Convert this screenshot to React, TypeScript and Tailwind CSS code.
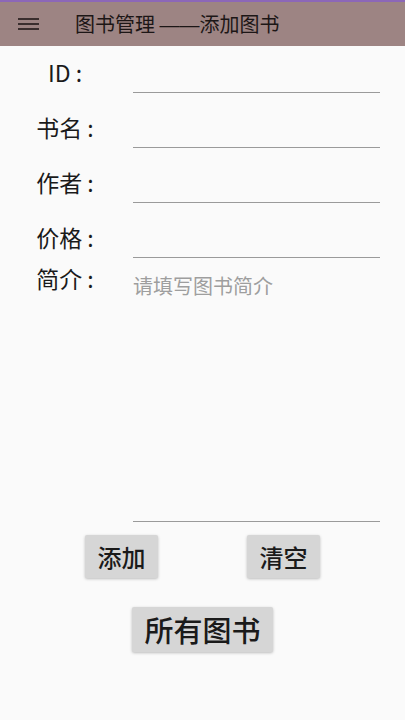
const font = { fontFamily: '"Noto Sans CJK SC", Roboto, sans-serif' };

const fields = ['ID :', '书名 :', '作者 :', '价格 :'];

function FieldRow({ label }: { label: string }) {
  return (
    <div className="flex h-[39px] items-start">
      <div className="w-[130px] text-center text-[23px] leading-[36px] text-[#1a1a1a]">{label}</div>
      <div className="ml-[3px] h-[39px] w-[247px] border-b border-[#9a9a9a]" />
    </div>
  );
}

export default function App() {
  return (
    <div className="min-h-[720px] w-[405px] bg-[#fafafa]" style={font}>
      <header className="flex h-[46px] items-center border-t-2 border-[#8c67b8] bg-[#9d8483]">
        <div className="ml-[18px] flex w-[21px] flex-col gap-[3px]">
          <span className="h-[2px] bg-[#3a2e2e]" />
          <span className="h-[2px] bg-[#3a2e2e]" />
          <span className="h-[2px] bg-[#3a2e2e]" />
        </div>
        <h1 className="ml-[36px] text-[20px] leading-none text-[#1c1616]">
          图书管理 <span className="font-['Liberation_Sans',sans-serif]">——</span>添加图书
        </h1>
      </header>

      <main className="pt-[8px]">
        <div className="flex flex-col gap-[16px]">
          {fields.map((f) => (
            <FieldRow key={f} label={f} />
          ))}
        </div>

        <div className="mt-[1px] flex">
          <div className="w-[130px] text-center text-[23px] leading-[38px] text-[#1a1a1a]">简介 :</div>
          <div className="ml-[3px] h-[263px] w-[247px] border-b border-[#9a9a9a] pt-[14px] text-[20px] leading-[26px] text-[#9e9e9e]">
            请填写图书简介
          </div>
        </div>

        <div className="mt-[13px] flex justify-center gap-[89px]">
          <button className="h-[43px] w-[73px] rounded-[2px] bg-[#d6d6d6] text-[24px] font-medium text-[#1a1a1a] shadow-[0_1px_3px_rgba(0,0,0,0.25)]">
            添加
          </button>
          <button className="h-[43px] w-[73px] rounded-[2px] bg-[#d6d6d6] text-[24px] font-medium text-[#1a1a1a] shadow-[0_1px_3px_rgba(0,0,0,0.25)]">
            清空
          </button>
        </div>

        <div className="mt-[29px] flex justify-center">
          <button className="h-[45px] w-[141px] rounded-[2px] bg-[#d6d6d6] text-[29px] font-medium text-[#1a1a1a] shadow-[0_1px_3px_rgba(0,0,0,0.25)]">
            所有图书
          </button>
        </div>
      </main>
    </div>
  );
}
